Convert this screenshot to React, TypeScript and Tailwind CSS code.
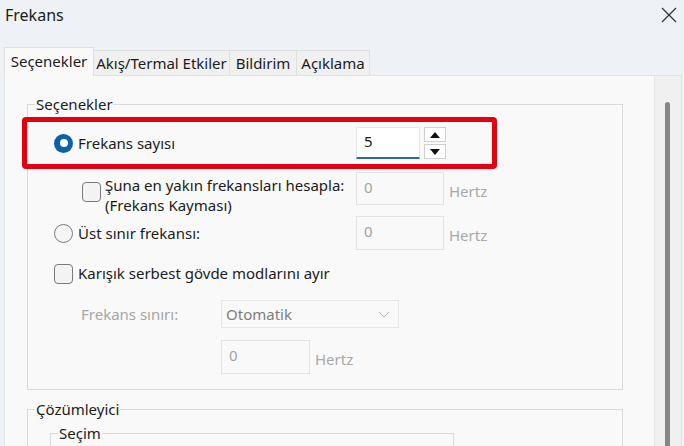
import React from "react"

function CheckedRadio() {
  return (
    <div className="w-[19px] h-[19px] shrink-0 rounded-full bg-[#0f5fb0] flex items-center justify-center">
      <div className="w-[8px] h-[8px] rounded-full bg-white" />
    </div>
  )
}

function Radio() {
  return <div className="w-[19px] h-[19px] shrink-0 rounded-full border border-[#7a7a7a] bg-[#f5f5f5]" />
}

function Checkbox() {
  return <div className="w-[19px] h-[20px] shrink-0 rounded-[4px] border border-[#7a7a7a] bg-[#f3f3f3]" />
}

function DisabledInput({ w }: { w: string }) {
  return (
    <div className={`${w} h-full border border-[#e3e3e3] pl-[7px] pt-[3px] text-[#a3a3a3] leading-[22px]`}>0</div>
  )
}

function Hertz() {
  return <span className="ml-[5px] mt-[8px] text-[#a8a8a8] leading-[22px]">Hertz</span>
}

export default function App() {
  return (
    <div className="relative w-[684px] h-[446px] overflow-hidden bg-[#eef1f5] text-[#1b1b1b] text-[15px] font-['Noto_Sans',sans-serif]">
      {/* title bar */}
      <div className="h-[47px] flex items-start justify-between pl-[5px] pr-[7px] pt-[3px]">
        <span className="text-[16px] leading-[24px]">Frekans</span>
        <svg width="16" height="16" viewBox="0 0 16 16" className="mt-[4px]">
          <line x1="1" y1="1" x2="15" y2="15" stroke="#333" strokeWidth="1.2" />
          <line x1="15" y1="1" x2="1" y2="15" stroke="#333" strokeWidth="1.2" />
        </svg>
      </div>

      {/* tabs */}
      <div className="h-[28px] flex items-end pl-[4px]">
        <div className="relative z-10 -mb-px w-[90px] h-[29px] border border-b-0 border-[#e0e0e0] bg-[#f9f9f9] flex items-center justify-center pb-[2px]">
          Seçenekler
        </div>
        <div className="w-[136px] h-[25px] border border-l-0 border-b-0 border-[#e0e0e0] bg-[#f0f0f0] flex items-center justify-center">
          Akış/Termal Etkiler
        </div>
        <div className="w-[67px] h-[25px] border border-l-0 border-b-0 border-[#e0e0e0] bg-[#f0f0f0] flex items-center justify-center">
          Bildirim
        </div>
        <div className="w-[73px] h-[25px] border border-l-0 border-b-0 border-[#e0e0e0] bg-[#f0f0f0] flex items-center justify-center">
          Açıklama
        </div>
      </div>

      {/* panel */}
      <div className="ml-[4px] w-[678px] h-[400px] border border-[#e3e3e3] bg-[#f9f9f9] flex">
        <div className="flex-1 pl-[22px]">
          {/* Seçenekler group */}
          <fieldset className="mt-[18px] w-[596px] border border-[#dadada] pb-[15px]">
            <legend className="ml-[7px] px-[1px] leading-[20px]">Seçenekler</legend>

            <div className="mt-[13px] h-[32px] flex items-center pl-[26px]">
              <div className="w-[302px] flex items-center gap-[5px]">
                <CheckedRadio />
                <span>Frekans sayısı</span>
              </div>
              <div className="w-[64px] h-full bg-white border border-[#e5e5e5] border-b-2 border-b-[#2a69ad] pl-[7px] flex items-center pb-[2px]">
                5
              </div>
              <div className="ml-[4px] h-full flex flex-col justify-between">
                <div className="w-[22px] h-[15px] border border-[#cfcfcf] bg-white flex items-center justify-center">
                  <svg width="10" height="6" viewBox="0 0 10 6"><polygon points="5,0 10,6 0,6" fill="#111" /></svg>
                </div>
                <div className="w-[22px] h-[15px] border border-[#cfcfcf] bg-white flex items-center justify-center">
                  <svg width="10" height="6" viewBox="0 0 10 6"><polygon points="0,0 10,0 5,6" fill="#111" /></svg>
                </div>
              </div>
            </div>

            <div className="mt-[13px] h-[44px] flex items-start pl-[26px]">
              <div className="w-[302px] flex items-start gap-[4px] pl-[28px]">
                <div className="mt-[10px]"><Checkbox /></div>
                <span className="mt-[3px] leading-[20px]">
                  Şuna en yakın frekansları hesapla:<br />(Frekans Kayması)
                </span>
              </div>
              <div className="h-[33px] flex items-start">
                <DisabledInput w="w-[88px]" />
                <Hertz />
              </div>
            </div>

            <div className="h-[34px] flex items-center pl-[26px]">
              <div className="w-[302px] flex items-center gap-[5px]">
                <Radio />
                <span>Üst sınır frekansı:</span>
              </div>
              <div className="h-full flex items-start">
                <DisabledInput w="w-[88px]" />
                <Hertz />
              </div>
            </div>

            <div className="mt-[12px] h-[23px] flex items-center pl-[26px] gap-[5px]">
              <Checkbox />
              <span>Karışık serbest gövde modlarını ayır</span>
            </div>

            <div className="mt-[15px] h-[28px] flex items-center pl-[26px]">
              <div className="w-[167px] pl-[27px] text-[#a5a5a5]">Frekans sınırı:</div>
              <div className="w-[178px] h-full border border-[#e6e6e6] flex items-center justify-between pl-[4px] pr-[8px] text-[#7d7d7d]">
                <span>Otomatik</span>
                <svg width="12" height="7" viewBox="0 0 12 7"><polyline points="1,1 6,6 11,1" fill="none" stroke="#b5b5b5" strokeWidth="1" /></svg>
              </div>
            </div>

            <div className="mt-[12px] h-[34px] flex items-start pl-[193px]">
              <DisabledInput w="w-[89px]" />
              <Hertz />
            </div>
          </fieldset>

          {/* Çözümleyici group */}
          <fieldset className="mt-[9px] w-[596px] h-[120px] border border-[#dadada]">
            <legend className="ml-[7px] px-[1px] leading-[20px]">Çözümleyici</legend>
            <fieldset className="mt-[4px] ml-[22px] w-[404px] h-[80px] border border-[#dadada]">
              <legend className="ml-[7px] px-[1px] leading-[20px]">Seçim</legend>
            </fieldset>
          </fieldset>
        </div>

        {/* scrollbar */}
        <div className="w-[27px] border-l border-[#e6e6e6] bg-[#f0f0f0]">
          <div className="mt-[26px] ml-[10px] w-[5px] h-[400px] rounded-full bg-[#878787]" />
        </div>
      </div>

      {/* red highlight annotation */}
      <div className="absolute left-[22px] top-[117px] w-[475px] h-[52px] border-[5px] border-[#e3000f] rounded-[4px]" />
    </div>
  )
}
